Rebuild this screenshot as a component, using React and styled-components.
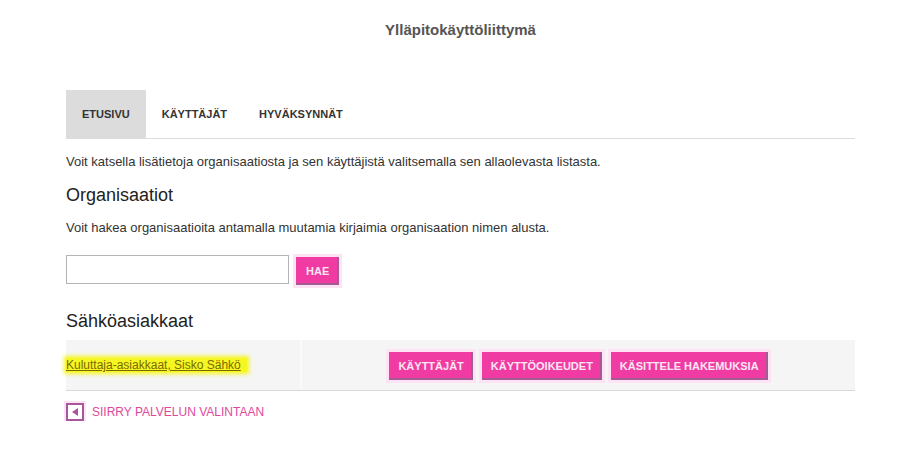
import styled, { createGlobalStyle } from "styled-components";

const GlobalStyle = createGlobalStyle`
  body {
    margin: 0;
    background: #fff;
    font-family: "Liberation Sans", Arial, sans-serif;
    color: #333;
  }
`;

const Page = styled.div`
  width: 789px;
  padding-left: 66px;
`;

const Title = styled.h1`
  margin: 0;
  padding-top: 21px;
  height: 90px;
  box-sizing: border-box;
  text-align: center;
  font-size: 15px;
  font-weight: bold;
  color: #555;
`;

const Tabs = styled.nav`
  display: flex;
  height: 48px;
  border-bottom: 1px solid #dcdcdc;
`;

const Tab = styled.a`
  display: flex;
  align-items: center;
  padding: 0 16px;
  font-size: 11px;
  font-weight: bold;
  text-transform: uppercase;
  color: #333;
  text-decoration: none;
  background: ${({ $active }) => ($active ? "#dcdcdc" : "transparent")};
`;

const Text = styled.p`
  margin: ${({ $mt }) => $mt || "0"} 0 0;
  font-size: 13px;
  color: #333;
  line-height: 16px;
`;

const Heading = styled.h2`
  margin: ${({ $mt }) => $mt} 0 0;
  font-size: 18px;
  font-weight: normal;
  color: #222;
  line-height: 22px;
`;

const SearchRow = styled.div`
  display: flex;
  align-items: flex-start;
  gap: 7px;
  margin-top: 19px;
`;

const Input = styled.input`
  width: 223px;
  height: 29px;
  box-sizing: border-box;
  border: 1px solid #b4b4b4;
  background: #fff;
  padding: 0 6px;
`;

const PinkButton = styled.button`
  height: 28px;
  margin-top: 2px;
  padding: 0 ${({ $pad }) => $pad || "9px"};
  border: 0;
  background: #f03ca2;
  color: #fbe6f3;
  font-family: "Liberation Sans", Arial, sans-serif;
  font-size: 11px;
  font-weight: bold;
  text-transform: uppercase;
  box-shadow: inset -2px -2px 0 #a45a93, 0 0 0 3px #fde3f3;
  cursor: pointer;
`;

const Table = styled.div`
  display: grid;
  grid-template-columns: 236px 1fr;
  margin-top: 8px;
  height: 50px;
  background: #f5f5f5;
  border-bottom: 1px solid #d8d8d8;
`;

const NameCell = styled.div`
  display: flex;
  align-items: center;
  border-right: 2px solid #fafafa;
`;

const ActionCell = styled.div`
  display: flex;
  align-items: center;
  justify-content: center;
  gap: 9px;
`;

const OrgLink = styled.a`
  font-size: 12px;
  color: #7a6a00;
  text-decoration: underline;
  background: #f6f622;
  box-shadow: 0 0 4px 2px #f6f622;
  padding-right: 6px;
`;

const BackLink = styled.a`
  display: flex;
  align-items: center;
  gap: 8px;
  margin-top: 12px;
  font-size: 12px;
  color: #e0489d;
  text-decoration: none;
  text-transform: uppercase;
`;

const BackIcon = styled.span`
  display: flex;
  align-items: center;
  justify-content: center;
  width: 14px;
  height: 14px;
  border: 2px solid #a8579a;
  background: #fff;
  box-shadow: 0 0 0 2px #fde3f3;
`;

export default function App() {
  return (
    <>
      <GlobalStyle />
      <Page>
        <Title>Ylläpitokäyttöliittymä</Title>
        <Tabs>
          <Tab $active>Etusivu</Tab>
          <Tab>Käyttäjät</Tab>
          <Tab>Hyväksynnät</Tab>
        </Tabs>
        <Text $mt="15px">
          Voit katsella lisätietoja organisaatiosta ja sen käyttäjistä valitsemalla sen allaolevasta listasta.
        </Text>
        <Heading $mt="14px">Organisaatiot</Heading>
        <Text $mt="14px">
          Voit hakea organisaatioita antamalla muutamia kirjaimia organisaation nimen alusta.
        </Text>
        <SearchRow>
          <Input type="text" />
          <PinkButton $pad="10px">Hae</PinkButton>
        </SearchRow>
        <Heading $mt="25px">Sähköasiakkaat</Heading>
        <Table>
          <NameCell>
            <OrgLink>Kuluttaja-asiakkaat, Sisko Sähkö</OrgLink>
          </NameCell>
          <ActionCell>
            <PinkButton>Käyttäjät</PinkButton>
            <PinkButton>Käyttöoikeudet</PinkButton>
            <PinkButton>Käsittele hakemuksia</PinkButton>
          </ActionCell>
        </Table>
        <BackLink>
          <BackIcon>
            <svg width="6" height="8" viewBox="0 0 6 8">
              <path d="M6 0 L0 4 L6 8 Z" fill="#a8579a" />
            </svg>
          </BackIcon>
          Siirry palvelun valintaan
        </BackLink>
      </Page>
    </>
  );
}
